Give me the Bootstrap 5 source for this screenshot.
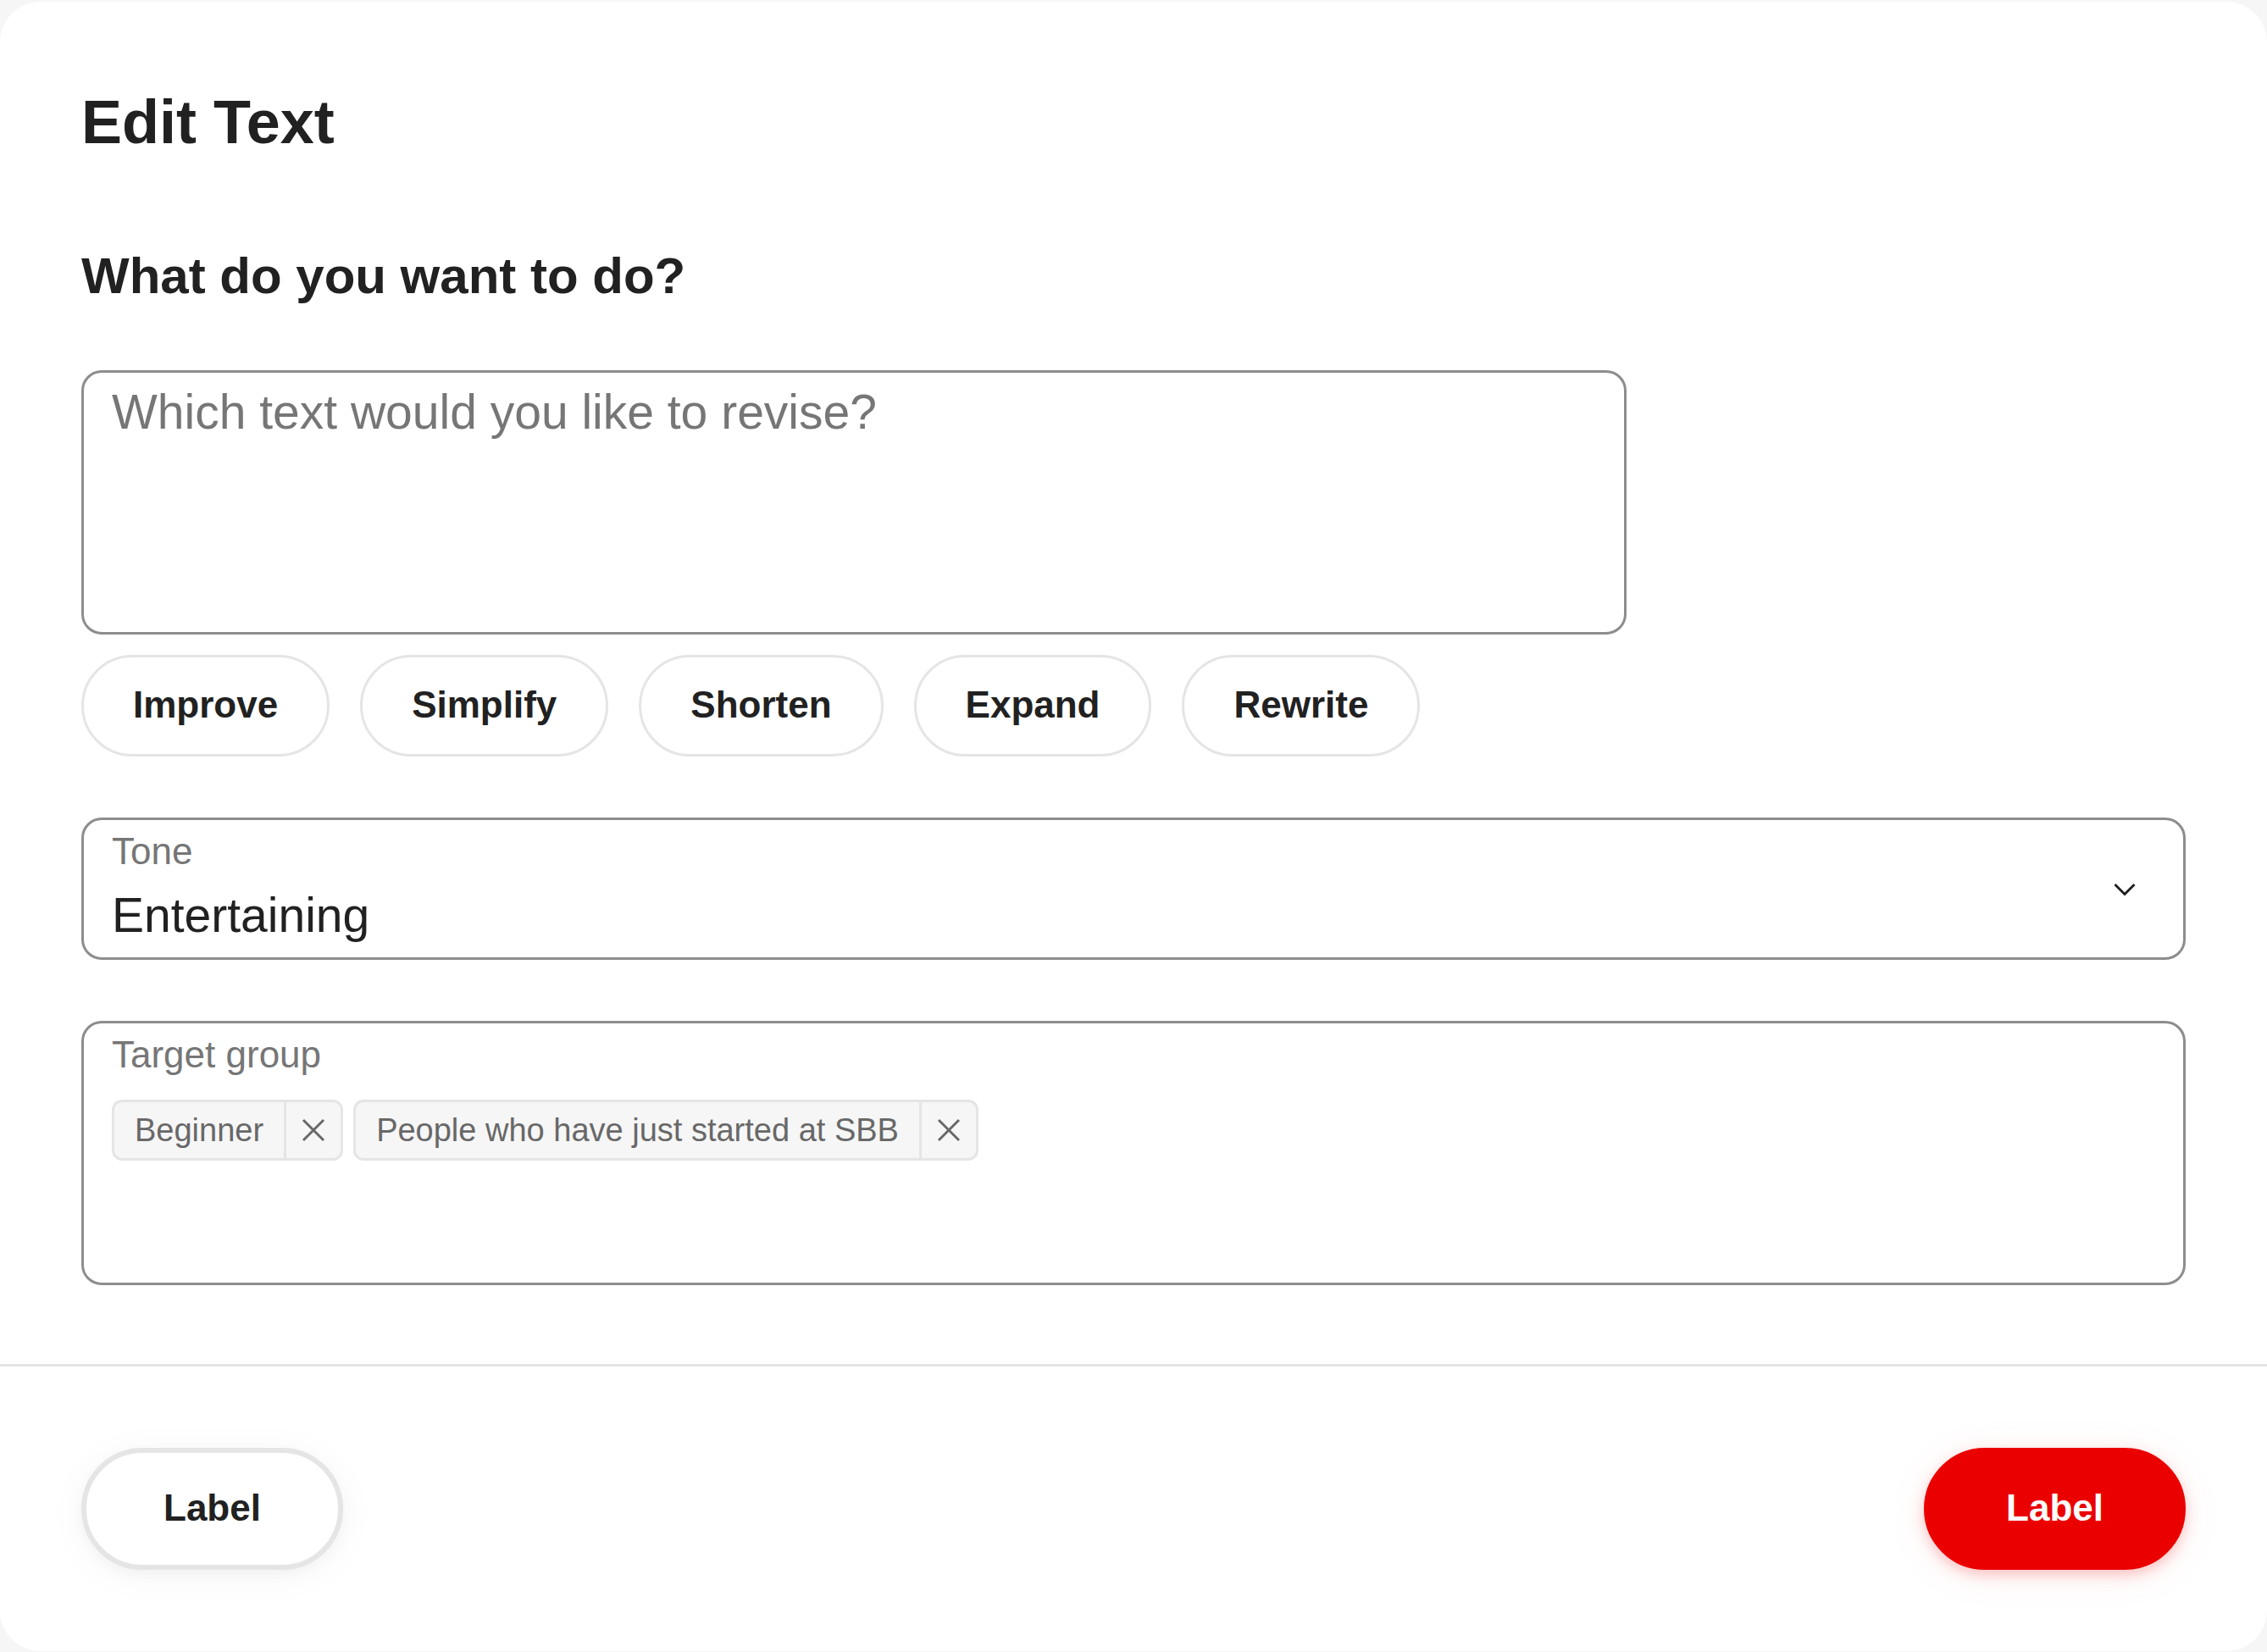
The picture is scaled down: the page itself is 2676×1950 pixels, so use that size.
<!DOCTYPE html>
<html lang="en">
<head>
<meta charset="utf-8">
<meta name="viewport" content="width=device-width, initial-scale=1">
<title>Edit Text</title>
<link href="https://cdn.jsdelivr.net/npm/bootstrap@5.3.0/dist/css/bootstrap.min.css" rel="stylesheet">
<style>
  :root {
    --ink: #212121;
    --muted: #767676;
    --tag-ink: #686868;
    --field-line: #8d8d8d;
    --soft-line: #e5e5e5;
    --milk: #f6f6f6;
    --brand: #eb0000;
  }
  body {
    background: var(--milk);
    color: var(--ink);
    font-family: "Liberation Sans", Arial, sans-serif;
    padding: 2px 0 1px;
  }
  .sheet { background: #fff; border-radius: 48px; min-height: calc(100vh - 3px); }
  .sheet-main { padding: 97px 96px 93px; }
  .sheet-title { font-size: 72px; line-height: 90px; margin-bottom: 95px; }
  .sheet-question { font-size: 60px; line-height: 84px; margin-bottom: 69px; }

  .field {
    background: #fff;
    border: 3px solid var(--field-line);
    border-radius: 24px;
    padding: 10px 33px;
  }
  .field-tall { min-height: 312px; }
  .field-label { color: var(--muted); font-size: 44px; line-height: 54px; }
  .field-value { color: var(--ink); font-size: 57px; line-height: 72px; }
  .prompt-field { height: 312px; max-width: 1824px; resize: none; }
  .prompt-field::placeholder { color: var(--muted); opacity: 1; }
  .tone-field { height: 168px; }
  .tone-select {
    appearance: none;
    background: transparent;
    border: 0;
    height: 72px;
    margin-top: 12px;
    padding: 0;
  }
  .chevron { height: 36px; margin-right: 18px; width: 36px; }

  .form-stack { gap: 72px; }
  .prompt-stack { gap: 24px; }
  .action-list { gap: 36px; }
  .pill-btn {
    --bs-btn-color: var(--ink);
    --bs-btn-bg: #fff;
    --bs-btn-border-color: var(--soft-line);
    --bs-btn-hover-color: var(--ink);
    --bs-btn-hover-bg: var(--milk);
    --bs-btn-hover-border-color: var(--soft-line);
    --bs-btn-border-width: 3px;
    --bs-btn-font-size: 44px;
    --bs-btn-font-weight: 700;
    --bs-btn-line-height: 54px;
    --bs-btn-padding-x: 58px;
    --bs-btn-padding-y: 0;
    height: 120px;
    padding-bottom: 3px;
  }
  .pill-lg {
    --bs-btn-border-width: 6px;
    --bs-btn-padding-x: 91px;
    box-shadow: 0 6px 48px rgba(0, 0, 0, .04), 0 6px 15px rgba(0, 0, 0, .03);
    height: 144px;
  }
  .pill-brand {
    --bs-btn-color: #fff;
    --bs-btn-bg: var(--brand);
    --bs-btn-border-color: var(--brand);
    --bs-btn-hover-color: #fff;
    --bs-btn-hover-bg: #c60018;
    --bs-btn-hover-border-color: #c60018;
    box-shadow: 0 6px 48px rgba(235, 0, 0, .08), 0 6px 15px rgba(235, 0, 0, .2);
  }

  .tag-list { gap: 12px; margin-top: 26px; }
  .tag {
    background: var(--milk);
    border: 3px solid var(--soft-line);
    border-radius: 12px;
    color: var(--tag-ink);
    font-size: 38px;
    height: 72px;
    line-height: 66px;
  }
  .tag-text { padding: 0 24px; }
  .tag-remove {
    background: transparent;
    border: 0;
    border-left: 3px solid var(--soft-line);
    color: inherit;
    padding: 0;
    width: 67px;
  }
  .tag-remove svg { height: 36px; width: 36px; }

  .sheet-footer { border-top: 3px solid var(--soft-line); padding: 96px; }
</style>
<script src="https://cdn.jsdelivr.net/npm/bootstrap@5.3.0/dist/js/bootstrap.bundle.min.js"></script>
</head>
<body>
<form class="sheet d-flex flex-column">
  <main class="sheet-main flex-grow-1">
    <h1 class="sheet-title fw-bold">Edit Text</h1>
    <h2 class="sheet-question fw-bold"><label for="prompt">What do you want to do?</label></h2>

    <div class="form-stack d-flex flex-column">
      <div class="prompt-stack d-flex flex-column">
        <textarea id="prompt" class="field field-value prompt-field w-100" placeholder="Which text would you like to revise?"></textarea>
        <div class="action-list d-flex flex-wrap">
          <button type="button" class="btn pill-btn rounded-pill">Improve</button>
          <button type="button" class="btn pill-btn rounded-pill">Simplify</button>
          <button type="button" class="btn pill-btn rounded-pill">Shorten</button>
          <button type="button" class="btn pill-btn rounded-pill">Expand</button>
          <button type="button" class="btn pill-btn rounded-pill">Rewrite</button>
        </div>
      </div>

      <div class="field tone-field d-flex align-items-center">
        <div class="d-flex flex-column flex-grow-1 align-self-start">
          <label class="field-label" for="tone">Tone</label>
          <select id="tone" class="field-value tone-select w-100">
            <option selected>Entertaining</option>
          </select>
        </div>
        <svg class="chevron flex-shrink-0" viewBox="0 0 36 36" fill="none" stroke="#212121" stroke-width="3" aria-hidden="true"><path d="M6.5 13 18 24.500 29.500 13"/></svg>
      </div>

      <div class="field field-tall" role="group" aria-labelledby="target-label">
        <div id="target-label" class="field-label">Target group</div>
        <div class="tag-list d-flex flex-wrap">
          <div class="tag d-flex">
            <span class="tag-text">Beginner</span>
            <button type="button" class="tag-remove d-flex align-items-center justify-content-center" aria-label="Remove Beginner">
              <svg viewBox="0 0 36 36" fill="none" stroke="currentColor" stroke-width="3" aria-hidden="true"><path d="M6 6 30 30M30 6 6 30"/></svg>
            </button>
          </div>
          <div class="tag d-flex">
            <span class="tag-text">People who have just started at SBB</span>
            <button type="button" class="tag-remove d-flex align-items-center justify-content-center" aria-label="Remove People who have just started at SBB">
              <svg viewBox="0 0 36 36" fill="none" stroke="currentColor" stroke-width="3" aria-hidden="true"><path d="M6 6 30 30M30 6 6 30"/></svg>
            </button>
          </div>
        </div>
      </div>
    </div>
  </main>

  <footer class="sheet-footer d-flex justify-content-between">
    <button type="button" class="btn pill-btn pill-lg rounded-pill">Label</button>
    <button type="submit" class="btn pill-btn pill-lg pill-brand rounded-pill">Label</button>
  </footer>
</form>
</body>
</html>
